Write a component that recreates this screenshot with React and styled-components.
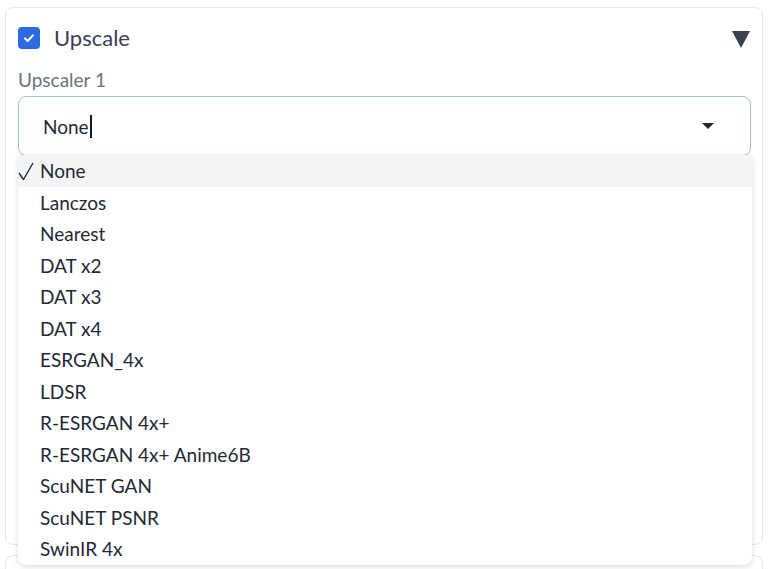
import React from "react";
import styled, { createGlobalStyle } from "styled-components";

const GlobalStyle = createGlobalStyle`
  html, body {
    margin: 0;
    padding: 0;
    background: #ffffff;
  }
  body {
    font-family: "Source Sans Pro", Lato, "Noto Sans", sans-serif;
    overflow: hidden;
  }
`;

const options = [
  "None",
  "Lanczos",
  "Nearest",
  "DAT x2",
  "DAT x3",
  "DAT x4",
  "ESRGAN_4x",
  "LDSR",
  "R-ESRGAN 4x+",
  "R-ESRGAN 4x+ Anime6B",
  "ScuNET GAN",
  "ScuNET PSNR",
  "SwinIR 4x",
];

const Page = styled.div`
  width: 769px;
  height: 569px;
  padding: 7px 6px 0 5px;
  box-sizing: border-box;
  display: flex;
  flex-direction: column;
  gap: 10px;
`;

const Panel = styled.div`
  position: relative;
  flex-shrink: 0;
  height: 538px;
  border: 1px solid #e5e7eb;
  border-radius: 8px;
  padding: 18px 11px 0 12px;
  box-sizing: border-box;
`;

const NextPanel = styled.div`
  flex-shrink: 0;
  height: 40px;
  border: 1px solid #e5e7eb;
  border-radius: 8px;
`;

const Header = styled.div`
  display: flex;
  align-items: center;
  height: 24px;
`;

const Checkbox = styled.span`
  width: 22px;
  height: 22px;
  border-radius: 4px;
  background: #2d6be4;
  display: flex;
  align-items: center;
  justify-content: center;
  flex-shrink: 0;
`;

const Title = styled.span`
  margin-left: 14px;
  font-size: 22px;
  color: #374151;
  flex: 1;
  line-height: 24px;
`;

const Caret = styled.span`
  width: 0;
  height: 0;
  border-left: 9px solid transparent;
  border-right: 9px solid transparent;
  border-top: 17px solid #374151;
  margin-right: 1px;
  margin-top: 2px;
`;

const Label = styled.div`
  margin-top: 19px;
  font-size: 19px;
  color: #6b7280;
  line-height: 22px;
`;

const Select = styled.div`
  margin-top: 5px;
  height: 60px;
  box-sizing: border-box;
  border: 1px solid #9cc3e5;
  border-radius: 8px;
  display: flex;
  align-items: center;
  padding: 0 36px 0 24px;
  font-size: 19px;
  color: #1f2937;
`;

const Value = styled.span`
  flex: 1;
  display: flex;
  align-items: center;
`;

const TextCaret = styled.span`
  width: 2px;
  height: 23px;
  background: #111827;
  margin-left: 1px;
`;

const Arrow = styled.span`
  width: 0;
  height: 0;
  border-left: 6px solid transparent;
  border-right: 6px solid transparent;
  border-top: 6px solid #1f2937;
`;

const Menu = styled.ul`
  position: absolute;
  left: 12px;
  top: 147px;
  width: 734px;
  margin: 0;
  padding: 0;
  list-style: none;
  background: #ffffff;
  border-radius: 0 0 8px 8px;
  box-shadow: 0 2px 6px rgba(0, 0, 0, 0.12), 0 0 1px rgba(0, 0, 0, 0.15);
  z-index: 2;
`;

const Item = styled.li`
  height: 31.5px;
  display: flex;
  align-items: center;
  padding-left: 22px;
  position: relative;
  font-size: 19px;
  color: #1f2937;
  background: ${(p) => (p.$active ? "#f3f4f6" : "transparent")};
`;

const Check = styled.svg`
  position: absolute;
  left: 0;
  top: 7px;
`;

const Hidden = styled.div`
  margin-top: 48px;
  height: 50px;
  border: 1px solid #e5e7eb;
  border-radius: 8px;
`;

export default function App() {
  return (
    <>
      <GlobalStyle />
      <Page>
        <Panel>
          <Header>
            <Checkbox>
              <svg width="14" height="14" viewBox="0 0 16 16">
                <path
                  d="M3.5 8.5l3 3 6-6.5"
                  fill="none"
                  stroke="#ffffff"
                  strokeWidth="2.4"
                  strokeLinecap="round"
                  strokeLinejoin="round"
                />
              </svg>
            </Checkbox>
            <Title>Upscale</Title>
            <Caret />
          </Header>
          <Label>Upscaler 1</Label>
          <Select>
            <Value>
              None
              <TextCaret />
            </Value>
            <Arrow />
          </Select>
          <Hidden />
          <Menu>
            {options.map((o, i) => (
              <Item key={o} $active={i === 0}>
                {i === 0 && (
                  <Check width="16" height="19" viewBox="0 0 16 19">
                    <path
                      d="M1 11 L5.5 17.5 L15 1"
                      fill="none"
                      stroke="#1f2937"
                      strokeWidth="1.4"
                      strokeLinejoin="round"
                    />
                  </Check>
                )}
                {o}
              </Item>
            ))}
          </Menu>
        </Panel>
        <NextPanel />
      </Page>
    </>
  );
}
